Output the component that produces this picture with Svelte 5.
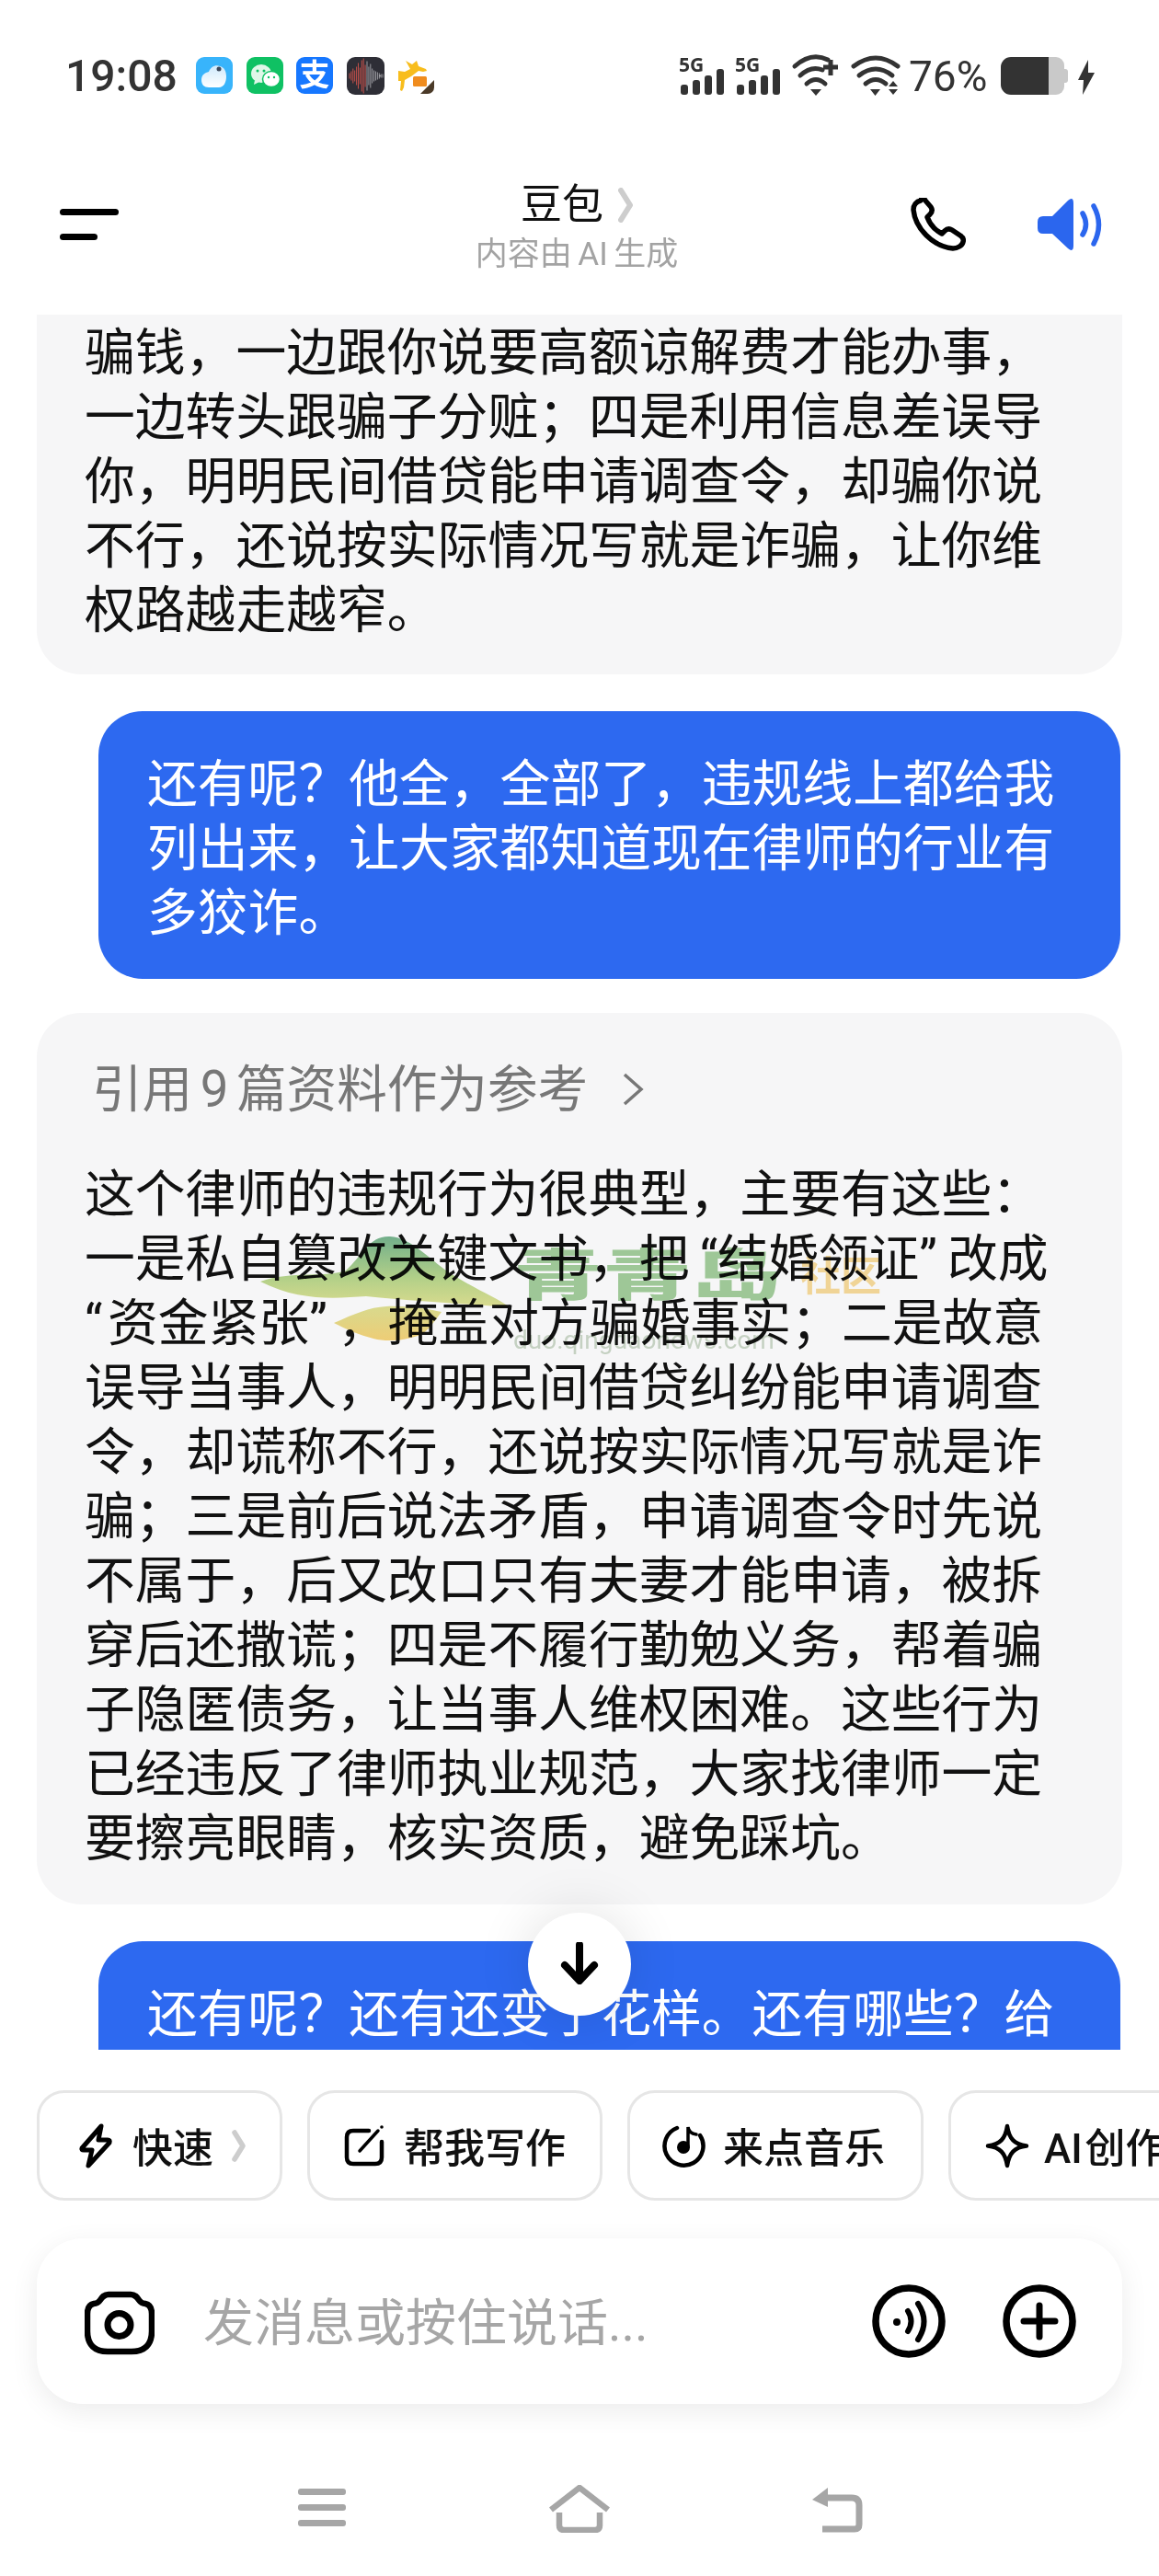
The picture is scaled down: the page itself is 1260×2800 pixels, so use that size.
<script>
  const first = [
    '骗钱，一边跟你说要高额谅解费才能办事，',
    '一边转头跟骗子分赃；四是利用信息差误导',
    '你，明明民间借贷能申请调查令，却骗你说',
    '不行，还说按实际情况写就是诈骗，让你维',
    '权路越走越窄。'
  ];
  const ask = [
    '还有呢？他全，全部了，违规线上都给我',
    '列出来，让大家都知道现在律师的行业有',
    '多狡诈。'
  ];
  const answer = [
    '这个律师的违规行为很典型，主要有这些：',
    '一是私自篡改关键文书，把\u2009“结婚领证”\u2009改成',
    '“\u200a资金紧张”\u2009，掩盖对方骗婚事实；二是故意',
    '误导当事人，明明民间借贷纠纷能申请调查',
    '令，却谎称不行，还说按实际情况写就是诈',
    '骗；三是前后说法矛盾，申请调查令时先说',
    '不属于，后又改口只有夫妻才能申请，被拆',
    '穿后还撒谎；四是不履行勤勉义务，帮着骗',
    '子隐匿债务，让当事人维权困难。这些行为',
    '已经违反了律师执业规范，大家找律师一定',
    '要擦亮眼睛，核实资质，避免踩坑。'
  ];
  const wave = [3,5,8,6,10,14,9,17,19,12,16,10,13,8,6,5,4,3,2,2];
</script>

<div class="phone">
  <div class="status">
    <span class="time">19:08</span>
    <div class="apps">
      <svg class="app" viewBox="0 0 40 40">
        <defs>
          <linearGradient id="cl" x1="0" y1="0" x2="0" y2="1"><stop offset="0" stop-color="#cfeafc"/><stop offset="1" stop-color="#ffffff"/></linearGradient>
        </defs>
        <rect width="40" height="40" rx="9" fill="#38b4fb"/>
        <path d="M6 25c0-6 4-8 8-9 2-5 7-8 12-6 5 1 7 6 7 11 0 7-3 12-8 12H14c-5 0-8-3-8-8z" fill="url(#cl)"/>
        <circle cx="25" cy="13" r="2.5" fill="#3d4a5c"/>
      </svg>
      <svg class="app" viewBox="0 0 40 40">
        <rect width="40" height="40" rx="9" fill="#0fc163"/>
        <ellipse cx="16" cy="18" rx="11" ry="10" fill="#dff7e8"/>
        <path d="M9 25l-1 5 6-3z" fill="#dff7e8"/>
        <ellipse cx="27" cy="24" rx="9.5" ry="8.5" fill="#fff" stroke="#0fc163" stroke-width="1.5"/>
        <circle cx="12" cy="15" r="1.5" fill="#0fc163"/><circle cx="19" cy="15" r="1.5" fill="#0fc163"/>
        <circle cx="24" cy="22" r="1.2" fill="#0fc163"/><circle cx="30" cy="22" r="1.2" fill="#0fc163"/>
      </svg>
      <div class="app alipay">支</div>
      <svg class="app rec" viewBox="0 0 41 41">
        <rect width="41" height="41" rx="9" fill="#2e2e36"/>
        {#each wave as h, i}
          <line x1={3 + i * 1.9} x2={3 + i * 1.9} y1={20.5 - h} y2={20.5 + h} stroke={i < 10 ? '#c4504a' : '#9a9aa0'} stroke-width="1"/>
        {/each}
        <circle cx="36" cy="20.5" r=".7" fill="#ccc"/>
      </svg>
      <svg class="app" viewBox="0 0 40 40">
        <rect width="40" height="40" rx="9" fill="#fff"/>
        <path d="M1 15l7 1 6-3-5-9 7 4 5-4 2 6 8 3 1 2-4 1-5-1-8 6-7 4-1 8-2 4-2-1 1-10-3 0z" fill="#f8bd1c"/>
        <rect x="17" y="21" width="15" height="11" rx="1.5" fill="#f08c1e"/>
        <path d="M40 25v8a7 7 0 0 1-7 7h-8z" fill="#4b3a28"/>
      </svg>
    </div>
    <div class="sys">
      <div class="sig">
        <span class="five">5G</span>
        <div class="bars"><i class="b1"></i><i class="b2"></i><i class="b3"></i><i class="b4"></i></div>
      </div>
      <div class="sig second">
        <span class="five">5G</span>
        <div class="bars"><i class="b1"></i><i class="b2"></i><i class="b3"></i><i class="b4"></i></div>
      </div>
      <svg class="wifi one" viewBox="0 0 52 42">
        <g fill="none" stroke="#333" stroke-width="5" stroke-linecap="round">
          <path d="M2 10Q20-6 38 3"/><path d="M8 20Q20 9 32 14"/><path d="M15 29Q25 20 35 29"/>
        </g>
        <path d="M19 35h12l-6 7z" fill="#333"/>
        <path d="M41 3v17M33 11h16" stroke="#333" stroke-width="5" fill="none"/>
      </svg>
      <svg class="wifi two" viewBox="0 0 52 42">
        <g fill="none" stroke="#333" stroke-width="5" stroke-linecap="round">
          <path d="M2 10Q26-8 50 10"/><path d="M8 20Q26 6 44 20"/><path d="M15 29Q26 20 37 29"/>
        </g>
        <path d="M20 35h11l-5.500 7zM40 32l5-6 5 6zM40 35h10l-5 6z" fill="#333"/>
      </svg>
      <span class="pct">76%</span>
      <div class="batt"><div class="lvl"></div><div class="rest"></div><div class="nub"></div></div>
      <svg class="bolt" viewBox="0 0 18 38"><path d="M11 0L0 22h6L5 38 18 14h-7z" fill="#333"/></svg>
    </div>
  </div>

  <header class="top">
    <div class="menu"><i class="l1"></i><i class="l2"></i></div>
    <div class="title">
      <div class="name"><span>豆包</span>
        <svg class="tchev" viewBox="0 0 16 38"><path d="M3 3l10 16L3 35" fill="none" stroke="#cdcdcd" stroke-width="6" stroke-linecap="round" stroke-linejoin="round"/></svg>
      </div>
      <div class="sub">内容由 AI 生成</div>
    </div>
    <div class="actions">
      <svg class="phoneic" viewBox="0 0 60 58"><path d="M11 3C6 4 3 8 3 13 5 33 24 53 46 55c5 0 10-3 11-7 1-3 0-5-3-7l-9-6c-3-2-6-1-8 1l-3 3c-8-4-13-10-16-18l3-3c2-2 3-5 1-8l-6-7c-1-2-3-3-4-3z" fill="none" stroke="#000" stroke-width="5.500" stroke-linejoin="round"/></svg>
      <svg class="spk" viewBox="0 0 70 58">
        <path d="M6 20h10L33 3q6-5 6 3v46q0 8-6 3L16 39H6q-6 0-6-6v-7q0-6 6-6z" fill="#2b66ee"/>
        <g fill="none" stroke="#2b66ee" stroke-width="5.500" stroke-linecap="round"><path d="M49 17q7 12 0 23"/><path d="M61 9q11 20 0 41"/></g>
      </svg>
    </div>
  </header>

  <main class="chat">
    <section class="bot clipped">
      {#each first as line}<span class="line">{line}</span>{/each}
    </section>
    <section class="me">
      {#each ask as line}<span class="line">{line}</span>{/each}
    </section>
    <section class="bot full">
      <div class="refs">
        <span>引用 9 篇资料作为参考</span>
        <svg class="rchev" viewBox="0 0 24 36"><path d="M3 2l18 16L3 34" fill="none" stroke="#777" stroke-width="3.500"/></svg>
      </div>
      {#each answer as line}<span class="line">{line}</span>{/each}
    </section>
    <section class="me tail">
      <span class="line">还有呢？还有还变了花样。还有哪些？给</span>
    </section>

    <div class="mark">
      <svg class="leaf" viewBox="0 0 280 116">
        <defs>
          <linearGradient id="lf" gradientUnits="userSpaceOnUse" x1="0" y1="0" x2="0" y2="116">
            <stop offset="0" stop-color="#74b48f"/><stop offset=".4" stop-color="#b9d88c"/><stop offset=".65" stop-color="#dfe293"/><stop offset="1" stop-color="#f8d478"/>
          </linearGradient>
        </defs>
        <path d="M7 50C40 38 80 46 100 38 118 22 125 0 148 1 172 2 195 30 215 42 240 58 265 68 278 78 230 74 180 72 122 66 90 68 50 72 7 50Z" fill="url(#lf)"/>
        <path d="M87 95C110 85 125 78 144 77 165 76 190 80 204 83 195 95 190 103 181 108 165 114 145 116 130 112 115 108 100 102 87 95Z" fill="url(#lf)"/>
      </svg>
      <span class="wm-name">青青岛</span>
      <span class="wm-tag">社区</span>
      <span class="wm-url">duo.qingdaonews.com</span>
    </div>

    <button class="down" aria-label="scroll to bottom">
      <svg viewBox="0 0 42 46"><path d="M21 3v38M5 25l16 17 16-17" fill="none" stroke="#000" stroke-width="8" stroke-linecap="round" stroke-linejoin="round"/></svg>
    </button>
  </main>

  <div class="chips">
    <div class="chip c1">
      <svg class="ic i1" viewBox="0 0 36 49"><path d="M24 3L3 27q-1 2 2 2h9l-4 17 23-25q1-3-2-3H21z" fill="none" stroke="#000" stroke-width="5" stroke-linejoin="round"/></svg>
      <span>快速</span>
      <svg class="cchev" viewBox="0 0 15 35"><path d="M3 3l9 14.500L3 32" fill="none" stroke="#cdcdcd" stroke-width="5.500" stroke-linecap="round" stroke-linejoin="round"/></svg>
    </div>
    <div class="chip c2">
      <svg class="ic i2" viewBox="0 0 42 44"><path d="M26 6H9Q2 6 2 13v22q0 7 7 7h24q7 0 7-7V18" fill="none" stroke="#000" stroke-width="4.500" stroke-linecap="round"/><path d="M16 28L36 6" stroke="#000" stroke-width="3.500" stroke-linecap="round"/><circle cx="40" cy="2" r="1.800"/></svg>
      <span>帮我写作</span>
    </div>
    <div class="chip c3">
      <svg class="ic i3" viewBox="0 0 48 46"><path d="M16 4A21 21 0 1 0 41 12" fill="none" stroke="#000" stroke-width="4.500" stroke-linecap="round"/><circle cx="23" cy="25" r="7"/><path d="M28 25V3q1 7 9 8" fill="none" stroke="#000" stroke-width="3.500" stroke-linecap="round"/></svg>
      <span>来点音乐</span>
    </div>
    <div class="chip c4">
      <svg class="ic i4" viewBox="0 0 48 49"><path d="M24 3c2 14 8 20 21 21.500C32 26 26 32 24 46c-2-14-8-20-21-21.500C16 23 22 17 24 3z" fill="none" stroke="#000" stroke-width="4.500" stroke-linejoin="round"/></svg>
      <span>AI 创作</span>
    </div>
  </div>

  <div class="input">
    <svg class="cam" viewBox="0 0 76 70"><path d="M26 4h24c5 0 7 3 9 6 2 3 4 4 7 4 5 1 7 5 7 11v19c0 15-8 22-22 22H25C11 66 3 59 3 44V25c0-6 2-10 7-11 3 0 5-1 7-4 2-3 4-6 9-6z" fill="none" stroke="#000" stroke-width="6.500"/><circle cx="37.500" cy="37" r="12.500" fill="none" stroke="#000" stroke-width="7"/></svg>
    <span class="ph">发消息或按住说话...</span>
    <div class="tools">
      <svg class="round" viewBox="0 0 80 80"><circle cx="40" cy="40" r="36" fill="none" stroke="#000" stroke-width="7.500"/><circle cx="27" cy="41" r="4"/><path d="M39 29q7 11 0 22M50 21q13 19 0 39" fill="none" stroke="#000" stroke-width="6" stroke-linecap="round"/></svg>
      <svg class="round" viewBox="0 0 80 80"><circle cx="40" cy="40" r="36" fill="none" stroke="#000" stroke-width="7.500"/><path d="M40 23v34M23 40h34" fill="none" stroke="#000" stroke-width="7" stroke-linecap="round"/></svg>
    </div>
  </div>

  <nav class="nav">
    <div class="navcell">
      <div class="burger"><i></i><i></i><i></i></div>
    </div>
    <div class="navcell">
      <svg class="home" viewBox="0 0 68 52"><path d="M3 27L34 3l31 24M12 30v14q0 5 5 5h34q5 0 5-5V30" fill="none" stroke="#a6a6a6" stroke-width="6.500"/></svg>
    </div>
    <div class="navcell">
      <svg class="back" viewBox="0 0 56 50"><path d="M14 12h30q8 0 8 8v21q0 5-5 5H12" fill="none" stroke="#a6a6a6" stroke-width="7"/><path d="M18 1v21L1 14z" fill="#a6a6a6"/></svg>
    </div>
  </nav>
</div>

<style>
  :global(body) { margin: 0; background: #fff; }
  .phone {
    width: 1260px;
    height: 2800px;
    overflow: hidden;
    background: #fff;
    font-family: Roboto, "Noto Sans CJK SC", sans-serif;
    color: #111;
  }
  .status {
    height: 170px;
    box-sizing: border-box;
    padding: 62px 70px 0 71px;
    display: flex;
    align-items: flex-start;
  }
  .time { font-size: 48px; font-weight: 500; line-height: 42px; color: #333; width: 142px; }
  .apps { display: flex; gap: 14.500px; height: 41px; }
  .app { width: 40px; height: 40px; display: block; }
  .rec { width: 41px; height: 41px; }
  .alipay {
    background: #1677ff;
    border-radius: 9px;
    color: #fff;
    font-size: 33px;
    line-height: 40px;
    text-align: center;
    font-weight: 700;
  }
  .sys { margin-left: auto; display: flex; align-items: flex-start; height: 42px; }
  .sig { position: relative; width: 49px; height: 41px; }
  .sig.second { margin-left: 12px; }
  .five {
    position: absolute; left: 0; top: -3px;
    font: 700 21px/22px "Open Sans", sans-serif;
    color: #333;
  }
  .bars { position: absolute; left: 2px; bottom: 0; display: flex; align-items: flex-end; gap: 5.500px; }
  .bars i { display: block; width: 7.500px; background: #333; border-radius: 3px; }
  .b1 { height: 11px; } .b2 { height: 16px; } .b3 { height: 21px; } .b4 { height: 28px; }
  .wifi { width: 52px; height: 42px; overflow: visible; display: block; }
  .wifi.one { margin-left: 14px; }
  .wifi.two { margin-left: 12px; }
  .pct { font-size: 46px; line-height: 42px; color: #333; margin-left: 10px; width: 88px; }
  .batt { margin-left: 12px; display: flex; align-items: center; height: 41px; width: 73px; }
  .lvl { width: 52px; height: 41px; background: #333; border-radius: 11px 0 0 11px; }
  .rest { width: 17px; height: 41px; background: #c9c9c9; border-radius: 0 9px 9px 0; }
  .nub { width: 4px; height: 15px; background: #c9c9c9; border-radius: 0 3px 3px 0; }
  .bolt { width: 18px; height: 38px; margin: 3px 0 0 11px; display: block; }

  .top {
    height: 172px;
    box-sizing: border-box;
    display: grid;
    grid-template-columns: 1fr auto 1fr;
    padding: 24px 62px 0 65px;
    align-items: start;
  }
  .menu { display: flex; flex-direction: column; gap: 20px; margin-top: 33px; }
  .menu i { display: block; height: 7px; background: #000; border-radius: 4px; }
  .l1 { width: 64px; } .l2 { width: 41px; }
  .title { text-align: center; margin-right: 9px; }
  .name { font-size: 45px; line-height: 58px; color: #111; display: flex; justify-content: center; align-items: center; gap: 16px; }
  .tchev { width: 16px; height: 38px; display: block; }
  .sub { font-size: 35px; line-height: 44px; margin-top: 3px; color: #a3a3a3; white-space: nowrap; word-spacing: -2px; }
  .actions { display: flex; justify-content: flex-end; gap: 78px; margin-top: 21px; }
  .phoneic { width: 60px; height: 58px; display: block; }
  .spk { width: 70px; height: 58px; display: block; }

  .chat {
    position: relative;
    height: 1886px;
    overflow: hidden;
    display: flex;
    flex-direction: column;
    align-items: stretch;
  }
  .line { display: block; white-space: nowrap; font-size: 54.800px; line-height: 70px; }
  .bot { margin: 0 40px; background: #f6f6f7; box-sizing: border-box; }
  .clipped { padding: 6px 52px 35px; border-radius: 0 0 48px 48px; }
  .me { margin: 40px 42px 0 107px; background: #2d69f0; color: #fff; padding: 44px 53px 37px; border-radius: 48px; }
  .full { margin-top: 37px; padding: 48px 52px 39px; border-radius: 48px; height: 969px; }
  .refs { display: flex; align-items: center; gap: 37px; color: #777; font-size: 54.600px; line-height: 70px; margin: 0 0 44px 8px; word-spacing: -5px; }
  .rchev { width: 24px; height: 36px; display: block; }
  .tail { padding-bottom: 4px; border-radius: 48px 48px 0 0; height: 118px; box-sizing: border-box; overflow: hidden; }

  .mark { position: absolute; left: 276px; top: 1001px; width: 690px; height: 120px; mix-blend-mode: multiply; pointer-events: none; }
  .leaf { position: absolute; left: 0; top: 0; width: 280px; height: 116px; }
  .wm-name { position: absolute; left: 282px; top: 15px; font-size: 97px; line-height: 97px; font-weight: 900; color: #a4cf9c; white-space: nowrap; transform: scaleY(.62); transform-origin: top left; }
  .wm-tag { position: absolute; left: 594px; top: 22px; font-size: 44px; line-height: 46px; font-weight: 700; color: #f9dc9b; white-space: nowrap; }
  .wm-url { position: absolute; left: 282px; top: 104px; font-size: 28px; line-height: 20px; color: #cdd9c9; white-space: nowrap; }

  .down {
    position: absolute;
    left: 574px;
    top: 1737px;
    width: 112px;
    height: 112px;
    border: 0;
    padding: 0;
    border-radius: 50%;
    background: #fff;
    box-shadow: 0 0 60px rgba(0,0,0,.12);
    display: flex;
    align-items: center;
    justify-content: center;
  }
  .down svg { width: 42px; height: 46px; display: block; margin-bottom: 3px; }

  .chips { display: flex; gap: 27px; padding: 44px 0 0 40px; height: 120px; }
  .chip {
    flex: none;
    box-sizing: border-box;
    height: 120px;
    border: 3px solid #e6e6e6;
    border-radius: 30px;
    display: flex;
    align-items: center;
    font-size: 44px;
    font-weight: 500;
    color: #111;
    white-space: nowrap;
  }
  .ic { display: block; flex: none; overflow: visible; }
  .c1 { width: 267px; padding-left: 43px; }
  .i1 { width: 36px; height: 49px; margin-right: 22px; }
  .cchev { width: 15px; height: 35px; margin-left: 20px; display: block; }
  .c2 { width: 321px; padding-left: 38px; }
  .i2 { width: 42px; height: 44px; margin-right: 22px; }
  .c3 { width: 322px; padding-left: 35px; }
  .i3 { width: 48px; height: 46px; margin-right: 18px; }
  .c4 { width: 320px; padding-left: 37px; }
  .i4 { width: 48px; height: 49px; margin-right: 16px; }
  .c4 span { word-spacing: -8px; }

  .input {
    margin: 41px 40px 0;
    height: 180px;
    box-sizing: border-box;
    background: #fff;
    border-radius: 50px;
    box-shadow: 0 8px 30px rgba(0,0,0,.08);
    display: flex;
    align-items: center;
    padding: 0 50px 0 52px;
  }
  .cam { width: 76px; height: 70px; display: block; margin-top: 4px; }
  .ph { font-size: 55px; color: #a6a6a6; margin-left: 53px; line-height: 70px; margin-top: 4px; white-space: nowrap; }
  .tools { margin-left: auto; display: flex; gap: 62px; }
  .round { width: 80px; height: 80px; display: block; }

  .nav {
    display: grid;
    grid-template-columns: repeat(3, 280px);
    justify-content: center;
    margin-top: 88px;
    align-items: start;
  }
  .navcell { display: flex; justify-content: center; }
  .burger { display: flex; flex-direction: column; gap: 10px; width: 52px; margin-top: 4px; }
  .burger i { display: block; height: 7px; background: #a6a6a6; border-radius: 3px; }
  .home { width: 68px; height: 52px; display: block; }
  .back { width: 56px; height: 50px; display: block; margin-top: 2px; }
</style>
